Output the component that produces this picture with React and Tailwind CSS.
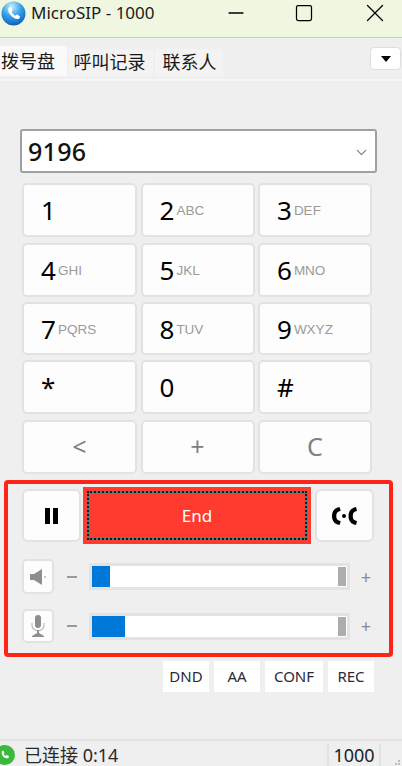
import React from 'react';
import { Minus, Square, X, ChevronDown } from 'lucide-react';

const font = "font-['Noto_Sans','Noto_Sans_CJK_SC',sans-serif]";

const keyRows = [
  { h: 'h-[54px]', mt: '', keys: [['1', ''], ['2', 'ABC'], ['3', 'DEF']] },
  { h: 'h-[54px]', mt: 'mt-[6px]', keys: [['4', 'GHI'], ['5', 'JKL'], ['6', 'MNO']] },
  { h: 'h-[53px]', mt: 'mt-[5px]', keys: [['7', 'PQRS'], ['8', 'TUV'], ['9', 'WXYZ']] },
  { h: 'h-[54px]', mt: 'mt-[5px]', keys: [['*', ''], ['0', ''], ['#', '']] },
];

function AppIcon() {
  return (
    <svg width="25" height="25" viewBox="0 0 25 25" className="shrink-0">
      <defs>
        <radialGradient id="globe" cx="42%" cy="22%" r="85%">
          <stop offset="0%" stopColor="#cfeefc" />
          <stop offset="45%" stopColor="#37a5ea" />
          <stop offset="100%" stopColor="#0a55b5" />
        </radialGradient>
      </defs>
      <circle cx="12.5" cy="12.5" r="12" fill="url(#globe)" />
      <path d="M8 6.500c1-.8 2-.8 2.500.2l.9 2c.3.700 0 1.200-.6 1.700-.3.300-.3.700 0 1.200.8 1.200 1.700 2.100 2.900 2.800.5.300.9.200 1.200-.2.500-.6 1.100-.8 1.800-.4l1.700 1.100c.8.600.8 1.500 0 2.300-1.500 1.400-3.500 1-5.800-.4-2.300-1.500-4-3.500-5-5.700C7 9.300 7 7.700 8 6.500z" fill="#fff" />
    </svg>
  );
}

function Key({ h, num, sub }) {
  return (
    <div className={`${h} min-w-0 flex items-center pl-[17px] bg-[#fdfdfd] border-2 border-[#e2e2e2] rounded-[5px]`}>
      <span className="text-[26px] leading-none text-black">{num}</span>
      {sub && <span className="ml-[2px] mt-[2px] font-['Liberation_Sans',sans-serif] text-[13.500px] leading-none text-[#9a9a9a]">{sub}</span>}
    </div>
  );
}

function Slider({ fill, h }) {
  return (
    <div className={`flex-1 ${h} border-[3px] border-[#e3e3e3] bg-white flex items-stretch justify-between pr-[1px]`}>
      <div className={`${fill} bg-[#0078d7]`} />
      <div className="w-[8px] bg-[#adadad] my-[1px]" />
    </div>
  );
}

function VolumeRow({ icon, fill, h, btnH, className }) {
  return (
    <div className={`flex items-center ${className}`}>
      <div className={`w-[32px] ${btnH} shrink-0 bg-[#fdfdfd] border-2 border-[#e2e2e2] rounded-[5px] flex items-center justify-center`}>
        {icon}
      </div>
      <span className="w-[35px] shrink-0 pl-[13px] pr-[12px]">
        <span className="block h-[2px] bg-[#9a9a9a]" />
      </span>
      <Slider fill={fill} h={h} />
      <span className="w-[25px] shrink-0 text-[18px] leading-none text-[#8a8a92] text-right pr-[4px]">+</span>
    </div>
  );
}

function FlagButton({ w, label }) {
  return (
    <div className={`${w} h-[31px] bg-white flex items-center justify-center text-[15px] text-[#2a2a3a]`}>
      {label}
    </div>
  );
}

export default function App() {
  return (
    <div className={`${font} w-[402px] h-[766px] overflow-hidden flex flex-col bg-[#efefef]`}>
      {/* title bar */}
      <div className="h-[38px] shrink-0 bg-[#eff7e0] border-b border-[#c9c9c9] flex items-center pl-[1px] pb-[11px]">
        <AppIcon />
        <span className="ml-[5px] text-[17px] text-[#1a1a1a] whitespace-nowrap">MicroSIP - 1000</span>
        <div className="flex-1" />
        <Minus size={24} strokeWidth={1.300} className="text-black" />
        <Square size={20} strokeWidth={1.500} className="ml-[46px] text-black" />
        <X size={30} strokeWidth={1.050} className="ml-[46px] mr-[12px] text-black" />
      </div>

      {/* tabs */}
      <div className="h-[43px] shrink-0 flex items-end border-b-2 border-[#f7f7f7] pb-[3px] relative">
        <div className="w-[67px] h-[30px] bg-[#fafafa] text-[18px] leading-[30px] pl-[1px] text-[#1a1a1a] whitespace-nowrap">拨号盘</div>
        <div className="ml-[1px] w-[85px] h-[27px] bg-[#f3f3f3] text-[18px] leading-[26px] text-center pr-[2px] text-[#1a1a1a] whitespace-nowrap">呼叫记录</div>
        <div className="ml-[2px] w-[68px] h-[27px] bg-[#f3f3f3] text-[18px] leading-[26px] text-center pl-[1px] text-[#1a1a1a] whitespace-nowrap">联系人</div>
        <div className="absolute right-[1px] top-[9px] w-[31px] h-[23px] bg-white border border-[#dedede] rounded-[4px] flex items-center justify-center">
          <span className="w-0 h-0 border-x-[5px] border-x-transparent border-t-[6px] border-t-black" />
        </div>
      </div>

      {/* number input */}
      <div className="mt-[48px] ml-[20px] mr-[25px] h-[44px] shrink-0 bg-white border-2 border-[#a0a0a0] rounded-[3px] flex items-center pl-[6px] pr-[5px]">
        <span className="text-[25px] leading-none font-medium text-[#111] tracking-[0.3px]">9196</span>
        <div className="flex-1" />
        <ChevronDown size={17} strokeWidth={1.500} className="text-[#777] mt-[2px]" />
      </div>

      {/* keypad */}
      <div className="mt-[10px] ml-[22px] shrink-0">
        {keyRows.map((row, i) => (
          <div key={i} className={`grid grid-cols-[115px_114px_114px] gap-x-[3.500px] ${row.mt}`}>
            {row.keys.map(([num, sub]) => (
              <Key key={num} h={row.h} num={num} sub={sub} />
            ))}
          </div>
        ))}
        <div className="grid grid-cols-[115px_114px_114px] gap-x-[3.500px] mt-[6px]">
          {['<', '+', 'C'].map((c) => (
            <div key={c} className="h-[54px] min-w-0 bg-[#fdfdfd] border-2 border-[#e2e2e2] rounded-[5px] flex items-center justify-center text-[25px] text-[#808080]">
              {c}
            </div>
          ))}
        </div>
      </div>

      {/* call controls */}
      <div className="mt-[6px] ml-[4px] w-[389px] h-[177px] shrink-0 border-[4px] border-[#ff2418] rounded-[4px] pl-[14px] pr-[14px] pt-[3px]">
        <div className="flex items-center h-[57px]">
          <div className="w-[59px] h-[53px] bg-[#fdfdfd] border-2 border-[#e2e2e2] rounded-[6px] flex items-center justify-center gap-[3px]">
            <span className="w-[5px] h-[16px] bg-black" />
            <span className="w-[5px] h-[16px] bg-black" />
          </div>
          <div className="ml-[2px] w-[228px] h-[57px] bg-[#ff3b30] p-[4px]">
            <div className="w-full h-full border-2 border-dotted border-[#0c1a1f] bg-[#1d8f8c]">
              <div className="w-full h-full bg-[#ff3b30] flex items-center justify-center text-[17px] text-white">End</div>
            </div>
          </div>
          <div className="ml-[4px] w-[59px] h-[53px] bg-[#fdfdfd] border-2 border-[#e2e2e2] rounded-[6px] flex items-center justify-center">
            <svg width="25" height="18" viewBox="0 0 25 18">
              <path d="M7.500 0C2 1 0 4.500 0 9s2 8 7.500 9l1.200-3.800-2.400-1c-1.800-.8-2-2.500-2-4.200s.3-3.400 2-4.200l2.400-1z" fill="#000" />
              <path d="M24 0c-5.500 1-7.500 4.500-7.500 9s2 8 7.500 9l1-3.800-2.200-1c-1.800-.8-2-2.500-2-4.200s.3-3.400 2-4.200L25 3.800z" fill="#000" />
              <circle cx="12" cy="9" r="2" fill="#000" />
            </svg>
          </div>
        </div>
        <VolumeRow
          className="mt-[15px]"
          btnH="h-[35px]"
          h="h-[27px]"
          fill="w-[18px]"
          icon={
            <svg width="16" height="16" viewBox="0 0 16 16">
              <path d="M0 5h4l8-5v16l-8-5H0z" fill="#8e8e8e" />
              <circle cx="15" cy="8" r="1" fill="#b5b5b5" />
            </svg>
          }
        />
        <VolumeRow
          className="mt-[15px]"
          btnH="h-[34px]"
          h="h-[27px]"
          fill="w-[33px]"
          icon={
            <svg width="16" height="22" viewBox="0 0 16 22">
              <rect x="5" y="0" width="6" height="13" rx="3" fill="#8e8e8e" />
              <path d="M2 8v2c0 3.500 2.500 5.500 6 5.500s6-2 6-5.500V8" fill="none" stroke="#bcbcbc" strokeWidth="1.200" />
              <path d="M7 15h2v3l5 3v1H2v-1l5-3z" fill="#8e8e8e" />
            </svg>
          }
        />
      </div>

      {/* flags */}
      <div className="mt-[4px] ml-[163px] flex gap-[5px] shrink-0">
        <FlagButton w="w-[46px]" label="DND" />
        <FlagButton w="w-[46px]" label="AA" />
        <FlagButton w="w-[58px]" label="CONF" />
        <FlagButton w="w-[46px]" label="REC" />
      </div>

      <div className="flex-1" />

      {/* status bar */}
      <div className="h-[27px] shrink-0 border-t-2 border-[#e2e2e2] flex items-center relative pt-[3px]">
        <span className="w-[20px] h-[20px] -ml-[5px] rounded-full bg-[#3cb93c] flex items-center justify-center shrink-0">
          <svg width="10" height="10" viewBox="0 0 10 10">
            <path d="M2 1l1.500-.3 1 2-1 1c.4 1 1.200 1.800 2.300 2.300l1-1 2 1L8.500 8C5 9.500.5 5 2 1z" fill="#fff" />
          </svg>
        </span>
        <span className="ml-[9px] text-[18px] leading-none text-[#2a2a2a] whitespace-nowrap">已连接 0:14</span>
        <div className="flex-1" />
        <div className="w-[54px] h-full border-x-2 border-[#e2e2e2] mr-[21px] flex items-center justify-center text-[18px] leading-none text-[#222]">1000</div>
        <div className="absolute right-[2px] bottom-[1px] grid grid-cols-3 gap-[1px]">
          <span />
          <span />
          <span className="w-[2px] h-[2px] bg-[#bbb]" />
          <span />
          <span className="w-[2px] h-[2px] bg-[#bbb]" />
          <span className="w-[2px] h-[2px] bg-[#bbb]" />
        </div>
      </div>
    </div>
  );
}
